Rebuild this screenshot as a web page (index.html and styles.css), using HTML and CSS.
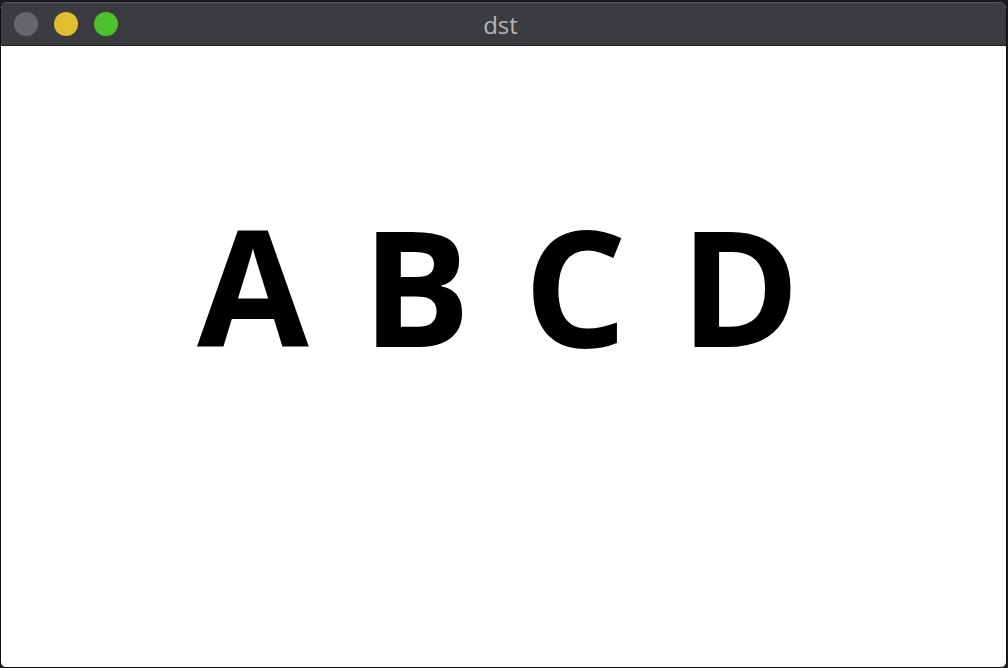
FILE: index.html
```html
<!DOCTYPE html>
<html>
<head>
<meta charset="utf-8">
<link rel="stylesheet" href="styles.css">
</head>
<body>
<div class="window">
  <div class="titlebar">
    <div class="lights">
      <span class="light gray"></span>
      <span class="light yellow"></span>
      <span class="light green"></span>
    </div>
    <div class="title">dst</div>
  </div>
  <div class="content">
    <div class="letters">A B C D</div>
  </div>
</div>
</body>
</html>
```
FILE: styles.css
```css
html, body {
  margin: 0;
  padding: 0;
  background: #1c1c1e;
  width: 1008px;
  height: 668px;
  overflow: hidden;
}
.window {
  box-sizing: border-box;
  width: 1007px;
  height: 667px;
  margin-top: 1px;
  border: 1px solid #0e0e0f;
  border-radius: 8px 8px 6px 6px;
  overflow: hidden;
  display: flex;
  flex-direction: column;
  background: #ffffff;
}
.titlebar {
  height: 44px;
  flex: none;
  background: #3b3c40;
  border-top: 1px solid #5a5b5f;
  border-bottom: 1px solid #1e1e20;
  box-sizing: border-box;
  display: flex;
  align-items: center;
  position: relative;
}
.lights {
  display: flex;
  gap: 16px;
  padding-left: 13px;
}
.light {
  width: 24px;
  height: 24px;
  border-radius: 50%;
  display: block;
}
.gray { background: #66676b; }
.yellow { background: #e5be2e; }
.green { background: #50c12e; }
.title {
  position: absolute;
  left: 0;
  right: 0;
  top: 0;
  bottom: 0;
  display: flex;
  align-items: center;
  justify-content: center;
  font-family: "Open Sans", "Liberation Sans", sans-serif;
  font-size: 24px;
  color: #b4b5b8;
  padding-right: 6px;
}
.content {
  flex: 1;
  display: flex;
  justify-content: center;
  padding-top: 157px;
  padding-right: 10px;
}
.letters {
  font-family: "Open Sans", "Noto Sans", sans-serif;
  font-weight: 670;
  font-size: 162px;
  line-height: 1;
  word-spacing: 11px;
  color: #000;
  white-space: pre;
  height: 200px;
}
```
